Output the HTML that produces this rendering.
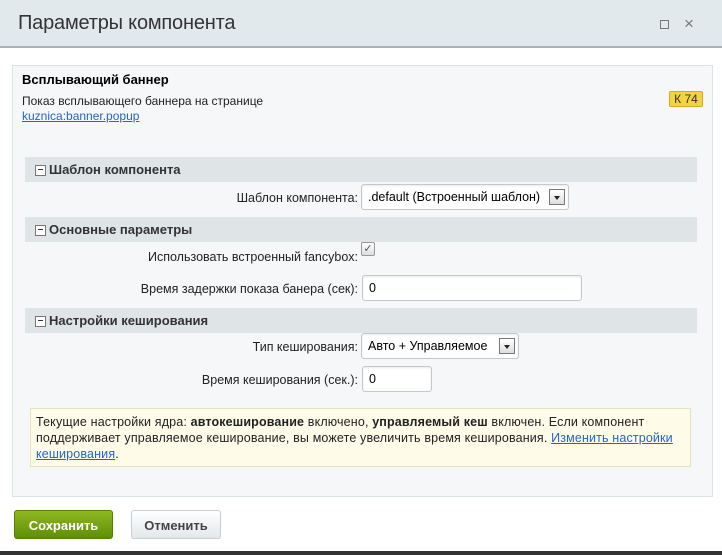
<!DOCTYPE html>
<html><head><meta charset="utf-8"><style>
*{box-sizing:border-box;margin:0;padding:0}
body{width:722px;height:555px;overflow:hidden;background:#fff;font-family:"Liberation Sans",sans-serif;color:#000;position:relative}
.abs{position:absolute}
.hdr{left:0;top:0;width:722px;height:48px;background:#e2e9ed;border-bottom:2px solid #aab2b8}
.title{left:18px;top:12px;font-size:20px;color:#333;letter-spacing:-0.2px}
.panel{left:12px;top:65px;width:701px;height:432px;background:#f5f7f8;border:1px solid #dce3e6}
.sec{left:25px;width:672px;height:25px;background:#dfe4e7;font-size:13px;font-weight:bold;color:#333;padding:5px 0 0 24px}
.sec:before{content:"";position:absolute;left:10px;top:8px;width:9px;height:9px;border:1px solid #777;background:#fff}
.sec:after{content:"";position:absolute;left:13px;top:12px;width:5px;height:1px;background:#333}
.lbl{font-size:12.5px;color:#222;text-align:right;width:340px;left:18px}
.inp{background:#fff;border:1px solid #c3c8cc;border-radius:3px;font-size:12.5px;padding:5px 6px;color:#000;box-shadow:inset 0 1px 2px #e8eaeb}
.dd{position:absolute;right:3px;top:4px;width:16px;height:16px;border:1px solid #777;background:linear-gradient(#fff,#ddd)}
.dd:after{content:"";position:absolute;left:4px;top:6px;border:3.5px solid transparent;border-top:4px solid #222}
.note{left:30px;top:408px;width:661px;height:59px;background:#fefbe9;border:1px solid #e6e2c0;font-size:12.5px;color:#222;padding:5px 5px;line-height:16px;letter-spacing:0.15px}
a{color:#2066c9}
.btn{top:510px;height:29px;border-radius:3px;font-size:13px;font-weight:bold;text-align:center;padding-top:7px}
</style></head><body>
<div class="abs hdr"></div>
<div class="abs title">Параметры компонента</div>
<div class="abs" style="left:660px;top:20px;width:9px;height:9px;border:1px solid #777"></div>
<div class="abs" style="left:684px;top:14px;font-size:17px;color:#777">×</div>
<div class="abs panel"></div>
<div class="abs" style="left:22px;top:72px;font-size:13px;font-weight:bold">Всплывающий баннер</div>
<div class="abs" style="left:22px;top:94px;font-size:12px;color:#222">Показ всплывающего баннера на странице</div>
<div class="abs" style="left:22px;top:109px;font-size:12px"><a href="#">kuznica:banner.popup</a></div>
<div class="abs" style="left:669px;top:91px;width:34px;height:16px;background:#f6d33c;border:1px solid #d4a924;border-radius:2px;font-size:12px;text-align:center;line-height:14px;color:#333">К 74</div>

<div class="abs sec" style="top:157px">Шаблон компонента</div>
<div class="abs lbl" style="top:191px">Шаблон компонента:</div>
<div class="abs inp" style="left:361px;top:184px;width:208px;height:26px">.default (Встроенный шаблон)<span class="dd"></span></div>

<div class="abs sec" style="top:217px">Основные параметры</div>
<div class="abs lbl" style="top:250px">Использовать встроенный fancybox:</div>
<div class="abs" style="left:361px;top:242px;width:14px;height:14px;border:1px solid #999;border-radius:2px;background:linear-gradient(#fff,#ddd);font-size:11px;line-height:12px;text-align:center;color:#555">✓</div>
<div class="abs lbl" style="top:282px">Время задержки показа банера (сек):</div>
<div class="abs inp" style="left:362px;top:275px;width:220px;height:26px">0</div>

<div class="abs sec" style="top:308px">Настройки кеширования</div>
<div class="abs lbl" style="top:340px">Тип кеширования:</div>
<div class="abs inp" style="left:361px;top:333px;width:158px;height:26px">Авто + Управляемое<span class="dd"></span></div>
<div class="abs lbl" style="top:373px">Время кеширования (сек.):</div>
<div class="abs inp" style="left:362px;top:366px;width:70px;height:26px">0</div>

<div class="abs note">Текущие настройки ядра: <b>автокеширование</b> включено, <b>управляемый кеш</b> включен. Если компонент поддерживает управляемое кеширование, вы можете увеличить время кеширования. <a href="#">Изменить настройки кеширования</a>.</div>

<div class="abs btn" style="left:14px;width:99px;background:linear-gradient(#8fb720,#5f8e06);border:1px solid #5a8000;color:#fff">Сохранить</div>
<div class="abs btn" style="left:131px;width:90px;background:linear-gradient(#fff,#e2e8eb);border:1px solid #c7cdd0;color:#444">Отменить</div>
<div class="abs" style="left:0;top:551px;width:722px;height:4px;background:#333"></div>
</body></html>
